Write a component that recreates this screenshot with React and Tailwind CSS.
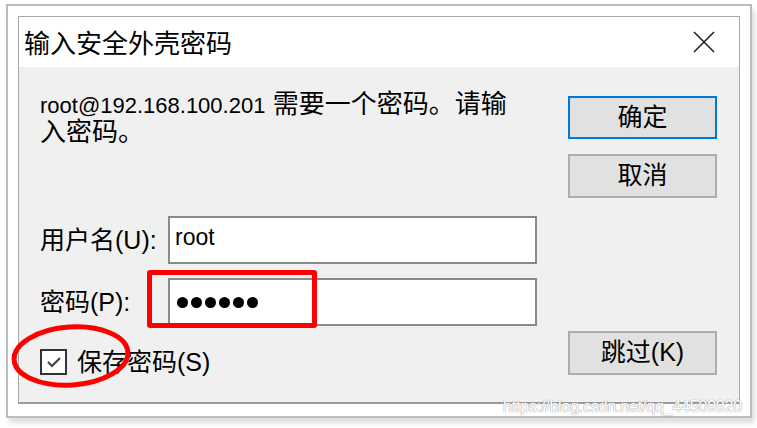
import React from "react";

function CloseIcon() {
  return (
    <svg width="22" height="22" viewBox="0 0 22 22" fill="none">
      <path d="M1 1 L21 21 M21 1 L1 21" stroke="#1a1a1a" strokeWidth="1.5" />
    </svg>
  );
}

function WinButton({ children, primary }) {
  return (
    <div
      className={
        "flex items-center justify-center w-[149px] bg-[#e1e1e1] border-2 text-[25px] text-black " +
        (primary ? "border-[#0078d7] h-[43px]" : "border-[#adadad] h-[44px]")
      }
    >
      {children}
    </div>
  );
}

export default function App() {
  return (
    <div className="relative w-[757px] h-[428px] bg-white overflow-hidden pl-[6px] pt-[4px] font-['Liberation_Sans','Noto_Sans_CJK_SC',sans-serif] text-black">
      {/* outer frame */}
      <div className="w-[746px] h-[414px] border-2 border-[#bdbdbd] bg-white pt-[10px] px-[10px] pb-[12px] flex shadow-[3px_5px_5px_rgba(0,0,0,0.13)]">
        {/* dialog */}
        <div className="flex-1 flex flex-col border border-[#a8a8a8] border-b-2 border-b-[#9a9a9a]">
          {/* title bar */}
          <div className="h-[50px] bg-white flex items-center justify-between pl-[5px] pr-[24px]">
            <span className="text-[26px] leading-none font-['Noto_Sans_CJK_SC',sans-serif]">输入安全外壳密码</span>
            <CloseIcon />
          </div>
          {/* body */}
          <div className="flex-1 bg-[#f0f0f0] flex pl-[21px] pr-[22px]">
            <div className="flex-1 flex flex-col">
              <div className="pt-[24px] text-[26px] leading-[27px]">
                <span className="text-[22px]">root@192.168.100.201</span> 需要一个密码。请输
                <br />
                入密码。
              </div>
              <div className="mt-[70px] flex items-center h-[48px]">
                <div className="w-[128px] text-[25px] leading-none">用户名(U):</div>
                <div className="w-[369px] h-[48px] bg-white border-2 border-[#8a8a8a] flex items-center pl-[5px] pb-[5px]">
                  <span className="text-[23px] leading-none">root</span>
                </div>
              </div>
              <div className="mt-[14px] flex items-center h-[48px]">
                <div className="w-[128px] text-[25px] leading-none">密码(P):</div>
                <div className="w-[369px] h-[48px] bg-white border-2 border-[#8a8a8a] flex items-center pl-[7px] gap-[3px]">
                  {[0, 1, 2, 3, 4, 5].map((i) => (
                    <span key={i} className="w-[11px] h-[11px] rounded-full bg-black" />
                  ))}
                </div>
              </div>
              <div className="mt-[23px] flex items-center gap-[10px]">
                <div className="w-[27px] h-[26px] border-2 border-[#333333] bg-white flex items-center justify-center">
                  <svg width="16" height="12" viewBox="0 0 16 12" fill="none">
                    <path d="M2 6 L6 10 L14 2" stroke="#444444" strokeWidth="2.2" />
                  </svg>
                </div>
                <span className="text-[25px] leading-none">保存密码(S)</span>
              </div>
            </div>
            <div className="w-[149px] flex flex-col pt-[29px] pb-[27px]">
              <WinButton primary>确定</WinButton>
              <div className="mt-[15px]">
                <WinButton>取消</WinButton>
              </div>
              <div className="mt-auto">
                <WinButton>跳过(K)</WinButton>
              </div>
            </div>
          </div>
        </div>
      </div>

      {/* red annotation rectangle */}
      <div className="absolute left-[147px] top-[270px] w-[170px] h-[58px] border-[5px] border-[#ff0000] rounded-[3px]" />

      {/* red annotation ellipse */}
      <svg className="absolute left-0 top-[315px]" width="150" height="85" viewBox="0 315 150 85" fill="none">
        <ellipse cx="71" cy="356" rx="57" ry="29" stroke="#ff0000" strokeWidth="5" transform="rotate(-4 71 356)" />
      </svg>

      {/* watermark */}
      <div className="absolute left-[503px] top-[399px] text-[16px] leading-none text-white font-['Liberation_Sans',sans-serif] [text-shadow:0_0_1px_#9a9a9a,0_0_1px_#9a9a9a] tracking-[-0.2px]">
        https://blog.csdn.net/qq_44509920
      </div>
    </div>
  );
}
